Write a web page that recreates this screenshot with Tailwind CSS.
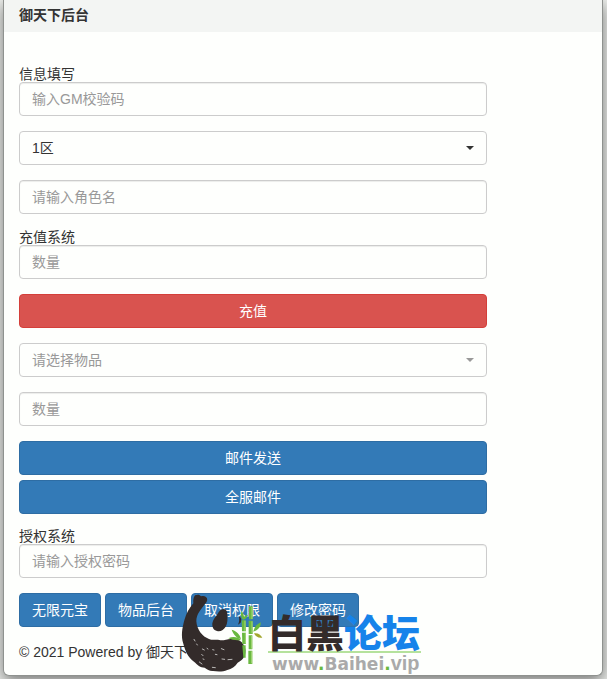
<!DOCTYPE html>
<html lang="zh-CN">
<head>
    <meta charset="UTF-8">
    <meta name="viewport" content="width=device-width, initial-scale=1.0">
    <title>御天下后台</title>

    <!-- Tailwind CSS -->
    <script src="https://cdn.jsdelivr.net/npm/@tailwindcss/browser@4"></script>
</head>
<body class="bg-[#eceeeb] pr-1 pb-[3px] pl-[3px] font-['Liberation_Sans','Noto_Sans_CJK_SC',sans-serif] text-sm leading-5 text-[#333]">
    <div class="relative rounded-b-md border border-t-0 border-[#8f928f] bg-[#fefffd] shadow-[0_5px_15px_rgba(0,0,0,0.5)]">
        <header class="h-8 bg-[#f3f5f3] px-[15px] pt-[5px]">
            <h1 class="font-bold">御天下后台</h1>
        </header>

        <main class="px-[15px] pt-[34px]">
            <form class="max-w-[468px]">
                <!-- Account info -->
                <div class="mb-[15px]">
                    <label for="checkCode" class="block h-4 leading-4">信息填写</label>
                    <input type="text" id="checkCode" placeholder="输入GM校验码" class="block h-[34px] w-full rounded border border-[#ccc] px-3 shadow-[inset_0_1px_1px_rgba(0,0,0,0.075)] placeholder:text-[#999]">
                </div>
                <div class="relative mb-[15px]">
                    <select id="zone" aria-label="区服" class="block h-[34px] w-full appearance-none rounded border border-[#ccc] px-3 text-[#333]">
                        <option>1区</option>
                    </select>
                    <svg class="pointer-events-none absolute top-[15px] right-[13px] h-1 w-2 fill-[#333]" viewBox="0 0 8 4"><path d="M0 0h8L4 4z"/></svg>
                </div>
                <input type="text" id="roleName" aria-label="角色名" placeholder="请输入角色名" class="mb-[15px] block h-[34px] w-full rounded border border-[#ccc] px-3 shadow-[inset_0_1px_1px_rgba(0,0,0,0.075)] placeholder:text-[#999]">

                <!-- Recharge -->
                <div class="mb-[15px]">
                    <label for="chargeNum" class="block h-4 leading-4">充值系统</label>
                    <input type="text" id="chargeNum" placeholder="数量" class="block h-[34px] w-full rounded border border-[#ccc] px-3 shadow-[inset_0_1px_1px_rgba(0,0,0,0.075)] placeholder:text-[#999]">
                </div>
                <button type="button" class="mb-[15px] block h-[34px] w-full rounded border border-[#d43f3a] bg-[#d9534f] text-white">充值</button>

                <!-- Mail -->
                <div class="relative mb-[15px]">
                    <select id="item" aria-label="物品" class="block h-[34px] w-full appearance-none rounded border border-[#ccc] px-3 text-[#999]">
                        <option>请选择物品</option>
                    </select>
                    <svg class="pointer-events-none absolute top-[15px] right-[13px] h-1 w-2 fill-[#999]" viewBox="0 0 8 4"><path d="M0 0h8L4 4z"/></svg>
                </div>
                <input type="text" id="itemNum" aria-label="物品数量" placeholder="数量" class="mb-[15px] block h-[34px] w-full rounded border border-[#ccc] px-3 shadow-[inset_0_1px_1px_rgba(0,0,0,0.075)] placeholder:text-[#999]">
                <button type="button" class="mb-[5px] block h-[34px] w-full rounded border border-[#2e6da4] bg-[#337ab7] text-white">邮件发送</button>
                <button type="button" class="mb-3.5 block h-[34px] w-full rounded border border-[#2e6da4] bg-[#337ab7] text-white">全服邮件</button>

                <!-- Authorization -->
                <div class="mb-[15px]">
                    <label for="authPwd" class="block h-4 leading-4">授权系统</label>
                    <input type="password" id="authPwd" placeholder="请输入授权密码" class="block h-[34px] w-full rounded border border-[#ccc] px-3 shadow-[inset_0_1px_1px_rgba(0,0,0,0.075)] placeholder:text-[#999]">
                </div>
                <div class="flex flex-wrap gap-1">
                    <button type="button" class="h-[34px] rounded border border-[#2e6da4] bg-[#337ab7] px-3 text-white">无限元宝</button>
                    <button type="button" class="h-[34px] rounded border border-[#2e6da4] bg-[#337ab7] px-3 text-white">物品后台</button>
                    <button type="button" class="h-[34px] rounded border border-[#2e6da4] bg-[#337ab7] px-3 text-white">取消权限</button>
                    <button type="button" class="h-[34px] rounded border border-[#2e6da4] bg-[#337ab7] px-3 text-white">修改密码</button>
                </div>
            </form>
        </main>

        <footer class="px-[15px] pt-[15px] pb-[13px]">© 2021 Powered by 御天下</footer>

        <!-- Forum watermark -->
        <div class="pointer-events-none absolute bottom-0 left-[166px] flex h-[90px]">
            <svg class="h-[94px] w-[98px] shrink-0" viewBox="0 0 294 282">
                <g fill="#332b2a">
                    <path d="M70 55c-1-9 0-18 5-24 8-3 15-2 18 3 9-3 16 0 18 6 2 7-1 12-6 17-12 16-26 30-26 52 2 26 18 46 38 53 12 5 20 0 31 3 13 3 25-5 39-3 18 0 30 7 35 20 6 9 5 18 3 28-5 12-12 18-22 23-8 12-18 19-31 22-14 6-30 5-43 3-10 1-17-5-25-10-13 0-22-9-32-18-18-13-27-34-32-54-8-23-3-48 3-70 5-20 15-37 27-51z"/>
                    <path d="M160 72c9 1 13 7 12 17 1 12 1 26-5 36-6 9-15 16-26 13-11-2-15-12-14-23 2-13 11-20 16-29 4-7 9-14 17-14z"/>
                    <path d="M206 94c8 3 10 11 6 19l-8 6c4-8 5-16 2-25z"/>
                </g>
                <g fill="none" stroke="#fefffd" stroke-width="2" stroke-linecap="round">
                    <path d="M72 163l3 5M80 177l2 3M97 192l6 3M111 190l3 2M128 194l4 1M95 208l4 4M99 222l3 1M88 231l8 6M127 247l9 1M154 191l8 3M156 222l8 1M174 224l12-1M136 208l5 1"/>
                </g>
                <g fill="#69b83f">
                    <path d="M215 106h12l1 33h-12zM216 143h12v34h-11zM217 181h10v37h-7z"/>
                    <path d="M237 64h11v39h-11zM236 107h12v40h-12zM236 151h11v42h-11zM235 197h12v40h-12z"/>
                    <path d="M217 103c-6-10-5-19-2-25 6 8 8 17 6 25zM218 101c4-8 10-11 16-12-2 8-8 14-15 15z"/>
                    <path d="M213 162c-14-3-23-14-28-28 14 4 24 12 28 28zM213 165c-14 3-27-1-38-5 13-7 29-5 38 5z"/>
                    <path d="M250 140c2-12 9-21 22-28 1 14-7 23-22 28z"/>
                    <path fill="#a3a72e" d="M252 145c12-2 20 4 25 13-12 2-20-3-25-13z"/>
                </g>
                <path d="M225 107v31M226 144v32M246 66v36M246 109v36M245 153v38M245 199v36" stroke="#a8d879" stroke-width="3" fill="none"/>
            </svg>
            <div class="pt-[30px] whitespace-nowrap">
                <p class="h-[38px] w-[153px] border-b-2 border-[#b5e29c] text-[38px] leading-[38px] font-black text-[#332b2a]">白黑<span class="text-[#1683ea]">论坛</span></p>
                <p class="pl-1 font-['DejaVu_Sans',sans-serif] text-[17px] leading-5 font-bold text-[#aaa]">www<span class="text-[#69b83f]">.</span>Baihei<span class="text-[#69b83f]">.</span><span class="font-['Liberation_Sans',sans-serif] text-xl leading-5">vip</span></p>
            </div>
        </div>
    </div>
</body>
</html>
